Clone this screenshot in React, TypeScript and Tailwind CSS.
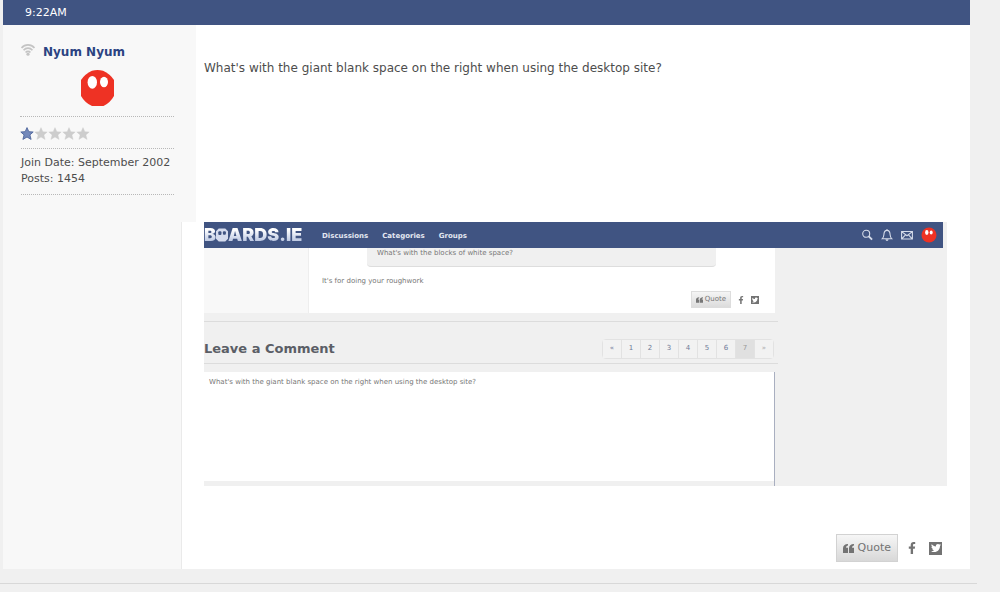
import type { ReactNode } from 'react';
import { FaFacebookF, FaTwitter } from 'react-icons/fa';

const pages = ['«', '1', '2', '3', '4', '5', '6', '7', '»'];

function Avatar({ className }: { className: string }) {
  return (
    <svg viewBox="0 0 33 36" className={className} aria-hidden="true">
      <path d="M11 .8Q16.500-.8 22 .8Q29 4 33 10V26Q29 33 22.500 36H11Q4 33 0 26V10Q4 4 11 .8z" fill="#ee3224" />
      <ellipse cx="11.3" cy="12.3" rx="4.7" ry="6.4" fill="#fff" />
      <ellipse cx="23" cy="12" rx="4" ry="5.2" fill="#fff" />
    </svg>
  );
}

function RoundAvatar() {
  return (
    <svg viewBox="0 0 16 16" className="size-4" aria-hidden="true">
      <circle cx="8" cy="8" r="7.500" fill="#ee3224" />
      <ellipse cx="5.800" cy="5.500" rx="1.700" ry="2.400" fill="#fff" />
      <ellipse cx="10.200" cy="5.500" rx="1.500" ry="2.100" fill="#fff" />
    </svg>
  );
}

function SignalIcon() {
  return (
    <svg viewBox="0 0 14 12" className="w-[14px] h-3 mt-px" fill="none" stroke="#c4c4c4" strokeWidth="1.7" aria-hidden="true">
      <path d="M.5 4C4-.2 10-.2 13.5 4M2.600 6.300c2.300-2.800 6.500-2.800 8.800 0M4.600 8.500c1.200-1.400 3.600-1.400 4.800 0" />
      <circle cx="7" cy="10.200" r="1.600" fill="#c4c4c4" stroke="none" />
    </svg>
  );
}

function Star({ active }: { active?: boolean }) {
  return (
    <svg viewBox="0 0 14 13" className="w-[14px] h-[13px]" aria-hidden="true">
      <path
        d="M7 .6l1.800 4.100 4.400.3-3.300 2.900 1.200 4.500L7 10l-4.100 2.400 1.200-4.500L.8 5l4.400-.3z"
        fill={active ? '#7489bb' : '#cdcdcd'}
        stroke={active ? '#4e659c' : '#cdcdcd'}
        strokeWidth={active ? 0.9 : 0.4}
      />
    </svg>
  );
}

function QuoteIcon({ className }: { className: string }) {
  return (
    <svg viewBox="0 0 11 9" className={className} fill="currentColor" aria-hidden="true">
      <path d="M5 0v1.600C3.700 1.800 3.100 2.500 3.100 3.800H5V9H0V4.300C0 1.700 1.800 0 5 0zM11 0v1.600C9.700 1.800 9.100 2.500 9.100 3.800H11V9H6V4.300C6 1.700 7.800 0 11 0z" />
    </svg>
  );
}

function Logo() {
  return (
    <a href="#" aria-label="BOARDS.IE" className="flex items-center w-[118px] leading-[26px] text-[18px] font-black font-['Inter',sans-serif]">
      <span className="bg-linear-to-b from-white from-30% to-[#b4c1de] to-80% bg-clip-text text-transparent">B</span>
      <svg viewBox="0 0 13 14" className="w-3 h-[14px]" aria-hidden="true">
        <path d="M3 0h7l3 3v8l-3 3H3l-3-3V3z" fill="#d5dcee" />
        <rect x="2.500" y="3" width="3.400" height="4" rx="1" fill="#405482" />
        <rect x="7.500" y="3" width="3.200" height="3.600" rx="1" fill="#405482" />
      </svg>
      <span className="bg-linear-to-b from-white from-30% to-[#b4c1de] to-80% bg-clip-text text-transparent">ARDS.IE</span>
    </a>
  );
}

function NavIcon({ label, children }: { label: string; children: ReactNode }) {
  return (
    <button type="button" aria-label={label}>
      <svg viewBox="0 0 12 12" className="size-3" fill="none" stroke="#d5dbe9" strokeWidth="1.100" aria-hidden="true">
        {children}
      </svg>
    </button>
  );
}

// Capture attached to the post
function Attachment() {
  return (
    <div className="w-full max-w-[743px] overflow-hidden bg-[#f0f0f0] text-[7px] text-[#777]">
      <div className="flex items-center h-[26px] mr-1 bg-[#405482]">
        <Logo />
        <nav className="flex gap-[14px] pt-[3px] font-bold text-[#e3e7f1]">
          <a href="#">Discussions</a>
          <a href="#">Categories</a>
          <a href="#">Groups</a>
        </nav>
        <div className="flex items-center gap-2 ml-auto mr-[6px]">
          <NavIcon label="Search">
            <circle cx="5.200" cy="4.800" r="3.500" />
            <path d="M7.800 7.300l3.300 3.300" strokeWidth="1.900" />
          </NavIcon>
          <NavIcon label="Notifications">
            <path d="M1.200 9.800c1.700-1.400 1.600-3 1.800-5C3.200 2.500 4.400 1.400 6 1.400s2.800 1.100 3 3.400c.2 2 .1 3.600 1.800 5zM5 10.400c.2 1.300 1.800 1.300 2 0M6 0v1.400" />
          </NavIcon>
          <NavIcon label="Messages">
            <path d="M.6 2.500h10.800v7.500H.6zM1 2.900l5 3.900 5-3.900M1 9.600l3.300-3.500M11 9.600L7.700 6.100" />
          </NavIcon>
          <RoundAvatar />
        </div>
      </div>

      <div className="w-[574px]">
        <div className="flex mr-[3px] h-[65px] bg-white">
          <div className="w-[105px] border-r border-[#eee] bg-[#f8f8f8]" />
          <div className="flex-1 pl-[13px]">
            <div className="h-[19px] ml-[45px] mr-[59px] pl-[10px] leading-[10px] rounded-b-sm border-b border-[#ddd] bg-[#f0f0f0]">
              What's with the blocks of white space?
            </div>
            <p className="mt-[9px] leading-[11px]">It's for doing your roughwork</p>
            <div className="flex items-center justify-end gap-[6px] mt-1 mr-4">
              <button type="button" className="flex items-center gap-[2px] h-[17px] px-1 border border-[#ddd] bg-linear-to-b from-[#f5f5f5] to-[#dcdcdc]">
                <QuoteIcon className="w-[7px] h-[6px]" />
                <span>Quote</span>
              </button>
              <a href="#" aria-label="Share on Facebook">
                <FaFacebookF className="size-2" />
              </a>
              <a href="#" aria-label="Share on Twitter" className="flex items-center justify-center size-2 bg-[#737373] text-white">
                <FaTwitter className="size-[6px]" />
              </a>
            </div>
          </div>
        </div>

        <div className="flex items-center justify-between mt-2 h-[43px] pt-3 border-y border-[#dcdcdc]">
          <h2 className="text-[13px] font-bold text-[#5b5e66]">Leave a Comment</h2>
          <div className="flex mr-1 rounded-sm border border-[#e2e2e2] text-[#707b98]">
            {pages.map((p) => (
              <button
                key={p}
                type="button"
                className={`w-[19px] h-[18px] pt-px border-r border-[#e2e2e2] last:w-[18px] last:border-r-0 last:text-[#aaa] ${p === '7' ? 'bg-[#e0e0e0] text-[#999]' : 'bg-[#f2f2f2]'}`}
              >
                {p}
              </button>
            ))}
          </div>
        </div>

        <div className="w-[571px] mt-2 border-r border-[#a9afc0]">
          <textarea
            aria-label="Comment"
            defaultValue="What's with the giant blank space on the right when using the desktop site?"
            className="block w-full h-[109px] px-[5px] py-[5px] leading-[11px] resize-none bg-white outline-none"
          />
          <div className="h-[5px]" />
        </div>
      </div>
    </div>
  );
}

export default function App() {
  return (
    <div className="min-h-screen bg-[#f0f0f0] text-xs text-[#4d4d4d] font-['DejaVu_Sans',Verdana,sans-serif]">
      <article className="ml-[3px] mr-[30px] bg-white">
        <header className="h-[25px] pl-[22px] text-[11px] leading-[25px] text-white bg-[#405482]">
          <time>9:22AM</time>
        </header>

        <div className="flex">
          <aside className="w-[178px] shrink-0 pl-[18px] pt-[18px] bg-[#f8f8f8]">
            <div className="flex gap-2">
              <SignalIcon />
              <a href="#" className="font-bold leading-[18px] text-[#2b4382]">Nyum Nyum</a>
            </div>
            <div className="w-[153px]">
              <Avatar className="block mx-auto mt-[9px] w-[33px] h-9" />
              <div className="flex items-center mt-[10px] h-8 pt-px -ml-px border-t border-dotted border-[#b8b8b8]">
                <Star active />
                <Star />
                <Star />
                <Star />
                <Star />
              </div>
              <div className="pt-[6px] pb-[7px] leading-4 whitespace-nowrap border-y border-dotted border-[#b8b8b8] text-[11px]">
                <p>Join Date: September 2002</p>
                <p>Posts: 1454</p>
              </div>
            </div>
          </aside>

          <div className="flex-1 min-w-0">
            <p className="h-[197px] pl-2 pt-[34px] leading-[18px] border-l-[15px] border-[#f8f8f8]">
              What's with the giant blank space on the right when using the desktop site?
            </p>
            <div className="pl-[22px] pr-[23px] pb-[7px] border-l border-[#eaeaea]">
              <Attachment />
              <div className="flex items-center justify-end mt-12 pr-[5px] text-[#737373]">
                <button type="button" className="flex items-center gap-1 h-7 px-[6px] text-[11px] border border-[#d2d2d2] bg-linear-to-b from-[#f6f6f6] to-[#d8d8d8]">
                  <QuoteIcon className="w-[11px] h-[9px]" />
                  Quote
                </button>
                <a href="#" aria-label="Share on Facebook" className="ml-2">
                  <FaFacebookF className="size-3" />
                </a>
                <a href="#" aria-label="Share on Twitter" className="flex items-center justify-center size-[13px] ml-[11px] bg-[#737373] text-white">
                  <FaTwitter className="size-[10px]" />
                </a>
              </div>
            </div>
          </div>
        </div>
      </article>
      <hr className="mt-[14px] mr-[23px] border-[#d8d8d8]" />
    </div>
  );
}
